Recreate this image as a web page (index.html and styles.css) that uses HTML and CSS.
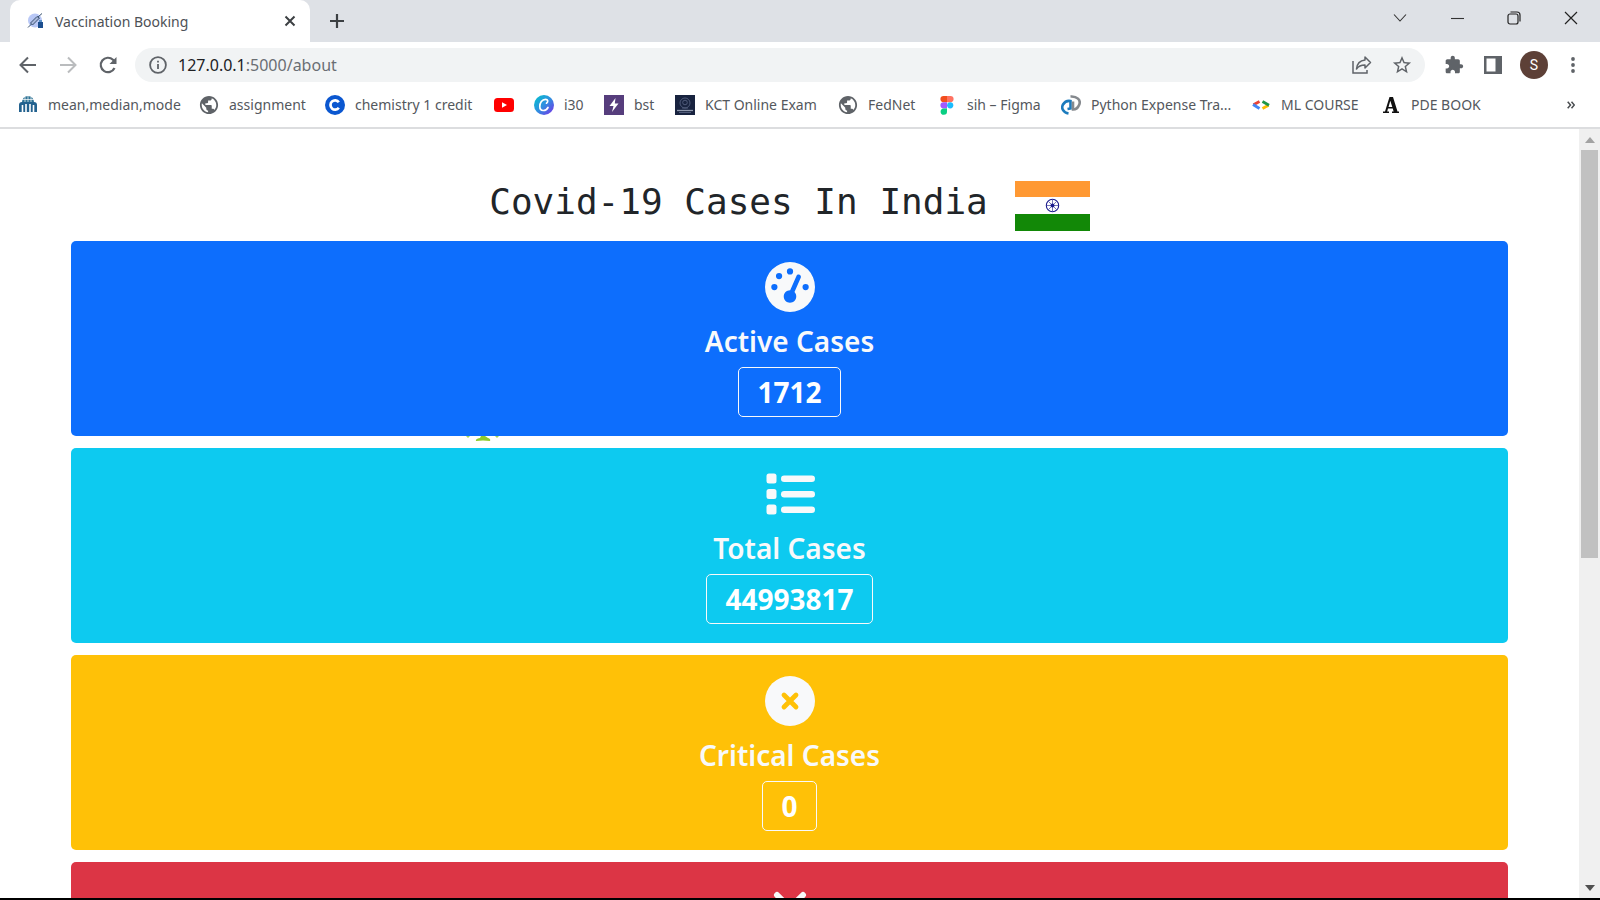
FILE: index.html
```html
<!DOCTYPE html>
<html lang="en">
<head>
<meta charset="utf-8">
<title>Vaccination Booking</title>
<link rel="stylesheet" href="styles.css">
</head>
<body>
<header class="browser">
  <div class="tabstrip">
    <div class="tab">
      <svg class="favicon" viewBox="0 0 16 16"><circle cx="8" cy="7.500" r="7" fill="#b9c8f6"/><path d="M1 14.500 4.500 11M3.500 10 10 3.500 12.500 5 5.500 12ZM11 4 15 .5" stroke="#38506e" fill="#a9b8dc"/><rect x="11" y="9" width="5" height="6" fill="#1d4f8f"/><rect x="12" y="7" width="3" height="2" fill="#5b91c9"/></svg>
      <span class="tab-title">Vaccination Booking</span>
      <button class="icon-btn" aria-label="Close tab"><svg width="12" height="12" viewBox="0 0 12 12"><path d="M1.500 1.500 10.500 10.500M10.500 1.500 1.500 10.500" stroke="#3c4043" stroke-width="2"/></svg></button>
    </div>
    <button class="icon-btn new-tab" aria-label="New tab"><svg width="16" height="16" viewBox="0 0 16 16"><path d="M8 1V15M1 8H15" stroke="#3c4043" stroke-width="2.200"/></svg></button>
    <div class="window-controls">
      <button class="icon-btn" aria-label="Search tabs"><svg width="14" height="14" viewBox="0 0 14 14"><path d="M1 3.500 7 10 13 3.500" fill="none" stroke="#333" stroke-width="1.100"/></svg></button>
      <button class="icon-btn" aria-label="Minimize"><svg width="14" height="14" viewBox="0 0 14 14"><path d="M1 7.500H14" stroke="#333" stroke-width="1.100"/></svg></button>
      <button class="icon-btn" aria-label="Restore"><svg width="14" height="14" viewBox="0 0 14 14"><g fill="none" stroke="#222" stroke-width="1.200"><rect x="1" y="3" width="10" height="10" rx="2"/><path d="M3.500 1H10Q13 1 13 4V10.500"/></g></svg></button>
      <button class="icon-btn" aria-label="Close"><svg width="14" height="14" viewBox="0 0 14 14"><path d="M1 1 13 13M13 1 1 13" stroke="#222" stroke-width="1.200"/></svg></button>
    </div>
  </div>
  <div class="toolbar">
    <nav class="nav-buttons">
      <button class="icon-btn" aria-label="Back"><svg width="18" height="18" viewBox="0 0 18 18"><path d="M17 9H2M9 1.500 1.500 9 9 16.500" fill="none" stroke="#5f6368" stroke-width="2"/></svg></button>
      <button class="icon-btn" aria-label="Forward"><svg width="18" height="18" viewBox="0 0 18 18"><path d="M1 9H16M9 1.500 16.500 9 9 16.500" fill="none" stroke="#babcbe" stroke-width="2"/></svg></button>
      <button class="icon-btn" aria-label="Reload"><svg width="18" height="18" viewBox="0 0 18 18"><path d="M15.500 12A7.200 7.200 0 1 1 14 3.800L16 6" fill="none" stroke="#5f6368" stroke-width="2.200"/><path d="M17.500 1V8H10.500Z" fill="#5f6368"/></svg></button>
    </nav>
    <div class="omnibox">
      <svg width="18" height="18" viewBox="0 0 18 18"><circle cx="9" cy="9" r="7.900" fill="none" stroke="#5f6368" stroke-width="1.800"/><path d="M9 8V13M9 4.800V6.600" stroke="#5f6368" stroke-width="1.800"/></svg>
      <span class="url"><span class="host">127.0.0.1</span>:5000/about</span>
      <button class="icon-btn" aria-label="Share"><svg width="20" height="18" viewBox="0 0 20 18"><g fill="none" stroke="#5f6368" stroke-width="1.500"><path d="M1 5V17H15V14"/><path d="M13 1 18.500 6.500 13 12V9C9 9 6.500 10 4.500 13 5 8 8 4.500 13 4Z" stroke-linejoin="round"/></g></svg></button>
      <button class="icon-btn" aria-label="Bookmark this page"><svg width="20" height="20" viewBox="1 1 22 22"><path fill="#5f6368" d="M22 9.240l-7.190-.62L12 2 9.190 8.630 2 9.240l5.460 4.730L5.820 21 12 17.270 18.180 21l-1.630-7.030L22 9.240zM12 15.400l-3.760 2.270 1-4.280-3.320-2.880 4.380-.38L12 6.100l1.710 4.040 4.380.38-3.320 2.880 1 4.280L12 15.400z"/></svg></button>
    </div>
    <div class="actions">
      <button class="icon-btn" aria-label="Extensions"><svg width="20" height="20" viewBox="0 0 24 24"><path fill="#5f6368" d="M20.500 11H19V7c0-1.100-.9-2-2-2h-4V3.500C13 2.120 11.880 1 10.500 1S8 2.120 8 3.500V5H4c-1.100 0-1.990.9-1.990 2v3.800H3.500c1.490 0 2.700 1.210 2.700 2.700s-1.210 2.700-2.700 2.700H2V20c0 1.100.9 2 2 2h3.800v-1.500c0-1.490 1.210-2.700 2.700-2.700s2.700 1.210 2.700 2.700V22H17c1.100 0 2-.9 2-2v-4h1.500c1.380 0 2.500-1.120 2.500-2.500S21.880 11 20.500 11z"/></svg></button>
      <button class="icon-btn" aria-label="Side panel"><svg width="18" height="18" viewBox="0 0 18 18"><path fill="#5f6368" fill-rule="evenodd" d="M0 0H18V18H0ZM2.500 2.500V15.500H11.500V2.500Z"/></svg></button>
      <button class="avatar" aria-label="Profile">S</button>
      <button class="icon-btn" aria-label="Menu"><svg width="4" height="16" viewBox="0 0 4 16"><g fill="#5f6368"><circle cx="2" cy="2" r="1.900"/><circle cx="2" cy="8" r="1.900"/><circle cx="2" cy="14" r="1.900"/></g></svg></button>
    </div>
  </div>
  <nav class="bookmarks">
    <a href="#"><svg viewBox="0 0 20 20"><path d="M4 7A6 6 0 0 1 16 7Z" fill="#2f7396"/><path d="M7 2V7M10 1V7M13 2V7M4 4.500H16" stroke="#fff" stroke-width=".7"/><path d="M1 17V10Q1 7 4 7H16Q19 7 19 10V17Z" fill="#23628f"/><path d="M4.500 17V10M8 17V9M12 17V9M15.500 17V10" stroke="#fff" stroke-width="1.600"/></svg>mean,median,mode</a>
    <a href="#"><svg viewBox="1 1 22 22"><path fill="#5f6368" d="M12 2C6.480 2 2 6.480 2 12s4.480 10 10 10 10-4.480 10-10S17.520 2 12 2zm-1 17.930c-3.950-.49-7-3.850-7-7.930 0-.62.08-1.210.21-1.790L9 15v1c0 1.100.9 2 2 2v1.930zm6.900-2.540c-.26-.81-1-1.390-1.900-1.390h-1v-3c0-.55-.45-1-1-1H8v-2h2c.55 0 1-.45 1-1V7h2c1.100 0 2-.9 2-2v-.41c2.930 1.190 5 4.060 5 7.410 0 2.080-.8 3.970-2.100 5.390z"/></svg>assignment</a>
    <a href="#"><svg viewBox="0 0 20 20"><circle cx="10" cy="10" r="10" fill="#0b57d0"/><path d="M13.800 7.300A4.600 4.600 0 1 0 13.800 12.700" fill="none" stroke="#fff" stroke-width="2.700"/></svg>chemistry 1 credit</a>
    <a href="#" aria-label="YouTube"><svg viewBox="0 0 20 20"><rect y="3" width="20" height="14" rx="3.500" fill="#f00"/><path d="M8 7.300 13 10 8 12.700Z" fill="#fff"/></svg></a>
    <a href="#"><svg viewBox="0 0 20 20"><defs><linearGradient id="cv" x1="0" y1="0" x2="1" y2="1"><stop offset="0" stop-color="#00c4cc"/><stop offset=".5" stop-color="#2f8fe0"/><stop offset="1" stop-color="#7d2ae8"/></linearGradient></defs><circle cx="10" cy="10" r="10" fill="url(#cv)"/><path d="M12.500 8.200C14.500 7 14 4.300 11.500 4.300 8 4.300 5.800 8 5.800 11.500 5.800 16.800 12 16.500 14 12.500" fill="none" stroke="#fff" stroke-width="1.700" stroke-linecap="round"/></svg>i30</a>
    <a href="#"><svg viewBox="0 0 20 20"><rect width="20" height="20" fill="#563d7c"/><path d="M11.500 3 5.500 11H9.500L8 17 14.500 8.500H10.800Z" fill="#fff"/></svg>bst</a>
    <a href="#"><svg viewBox="0 0 20 20"><rect width="20" height="20" fill="#18233f"/><g fill="none" stroke="#4f5a79"><circle cx="10" cy="8" r="5"/><circle cx="10" cy="7.500" r="2.300"/><path d="M7 13H13"/></g><path d="M2 15.500H18" stroke="#8f98ad" stroke-width="1.300"/><path d="M4 17.500H16" stroke="#4f5a79"/></svg>KCT Online Exam</a>
    <a href="#"><svg viewBox="1 1 22 22"><path fill="#5f6368" d="M12 2C6.480 2 2 6.480 2 12s4.480 10 10 10 10-4.480 10-10S17.520 2 12 2zm-1 17.930c-3.950-.49-7-3.850-7-7.930 0-.62.08-1.210.21-1.790L9 15v1c0 1.100.9 2 2 2v1.930zm6.900-2.540c-.26-.81-1-1.390-1.900-1.390h-1v-3c0-.55-.45-1-1-1H8v-2h2c.55 0 1-.45 1-1V7h2c1.100 0 2-.9 2-2v-.41c2.930 1.190 5 4.060 5 7.410 0 2.080-.8 3.970-2.100 5.390z"/></svg>FedNet</a>
    <a href="#"><svg viewBox="0 0 20 20"><path d="M10 1H6.500a3 3 0 0 0 0 6.200H10Z" fill="#f24e1e"/><path d="M10 1h3.500a3 3 0 0 1 0 6.200H10Z" fill="#ff7262"/><path d="M10 7.200H6.500a3 3 0 0 0 0 6.200H10Z" fill="#a259ff"/><circle cx="13.200" cy="10.300" r="3.100" fill="#1abcfe"/><path d="M6.700 13.400H10V16.500A3.200 3.200 0 1 1 6.700 13.400Z" fill="#0acf83"/></svg>sih – Figma</a>
    <a href="#"><svg viewBox="0 0 20 20"><g fill="none" stroke-width="2.600"><path d="M7.500 18.500C2 17.500 0 13 2 9.500 3.500 7 6.500 5.500 9.500 6V13.500L6.500 14" stroke="#1b7bbd"/><path d="M9.500 1.500C16 1 20 5 18.300 9.500 17 13 14.500 14.500 12 14.500V6.500" stroke="#85898e"/></g></svg>Python Expense Tra...</a>
    <a href="#"><svg viewBox="0 0 20 20"><g fill="none" stroke-width="2.800"><path d="M8.500 6.500 2.500 9.800" stroke="#ea4335"/><path d="M2 9.500 8.500 13.500" stroke="#4285f4"/><path d="M17.500 10.200 11.500 13.500" stroke="#fbbc04"/><path d="M11.500 6.500 18 10.200" stroke="#1e9649"/></g></svg>ML COURSE</a>
    <a href="#"><svg viewBox="0 0 20 20"><path fill="#111" fill-rule="evenodd" d="M8.500 2H12L16.500 16.500H18V18H11V16.500H12.600L11.800 13.500H7L6.200 16.500H8V18H2V16.500H4ZM9.300 5.800 7.500 12H11.300Z"/></svg>PDE BOOK</a>
    <button class="icon-btn more" aria-label="More bookmarks"><svg width="8" height="8" viewBox="0 0 8 8"><path d="M.7 .7 3.500 4 .7 7.300M4.500 .7 7.300 4 4.500 7.300" fill="none" stroke="#4a4d51" stroke-width="1.500"/></svg></button>
  </nav>
</header>
<div class="viewport">
  <main class="page">
    <h1 class="title">Covid-19 Cases In India
      <svg class="flag" viewBox="0 0 75 50"><rect width="75" height="50" fill="#fff"/><rect width="75" height="16" fill="#ff9933"/><rect y="33" width="75" height="17" fill="#128807"/><g fill="none" stroke="#1a1a8c"><circle cx="37.500" cy="24.500" r="6.200" stroke-width="1.100"/><path d="M37.500 19V30M32 24.500H43M33.600 20.600 41.400 28.400M41.400 20.600 33.600 28.400" stroke-width=".6"/></g><circle cx="37.500" cy="24.500" r="2" fill="#1a1a8c"/></svg>
    </h1>
    <section class="card active">
      <svg class="card-icon" viewBox="0 0 512 512"><path fill="currentColor" fill-rule="evenodd" d="M0 256a256 256 0 1 1 512 0A256 256 0 1 1 0 256zM288 96a32 32 0 1 0 -64 0 32 32 0 1 0 64 0zM256 416c35.300 0 64-28.700 64-64c0-17.400-6.900-33.100-18.100-44.600L366 161.700c5.300-12.100-.2-26.300-12.300-31.600s-26.300 .2-31.600 12.300L257.900 288c-.6 0-1.300 0-1.900 0c-35.300 0-64 28.700-64 64s28.700 64 64 64zM176 144a32 32 0 1 0 -64 0 32 32 0 1 0 64 0zM96 288a32 32 0 1 0 0-64 32 32 0 1 0 0 64zm352-32a32 32 0 1 0 -64 0 32 32 0 1 0 64 0z"/></svg>
      <h2>Active Cases</h2>
      <strong class="count">1712</strong>
      <svg class="sprout" width="34" height="6" viewBox="0 0 34 6"><path d="M10 5Q9 3 14 2L15 0H19L22 2Q25 3 24 5Q17 4 10 5Z" fill="#8fcb2b"/><path d="M0 0H4L2 2ZM29 0H33L31 2Z" fill="#a5d65a"/></svg>
    </section>
    <section class="card total">
      <svg class="card-icon" viewBox="0 0 50 50"><g fill="currentColor"><rect x="1.500" y="4.500" width="10" height="10" rx="2.500"/><rect x="1.500" y="20" width="10" height="10" rx="2.500"/><rect x="1.500" y="35.500" width="10" height="10" rx="2.500"/><rect x="16" y="6.500" width="34" height="6.500" rx="3.200"/><rect x="16" y="22" width="34" height="6.500" rx="3.200"/><rect x="16" y="37.500" width="34" height="6.500" rx="3.200"/></g></svg>
      <h2>Total Cases</h2>
      <strong class="count">44993817</strong>
    </section>
    <section class="card critical">
      <svg class="card-icon" viewBox="0 0 50 50"><circle cx="25" cy="25" r="25" fill="currentColor"/><path d="M19 19 31 31M31 19 19 31" stroke="#ffc107" stroke-width="4.800" stroke-linecap="round"/></svg>
      <h2>Critical Cases</h2>
      <strong class="count">0</strong>
    </section>
    <section class="card deaths">
      <svg class="card-icon" viewBox="0 0 50 50"><path d="M12 12 38 38M38 12 12 38" stroke="currentColor" stroke-width="6" stroke-linecap="round"/></svg>
    </section>
  </main>
  <div class="scrollbar">
    <svg width="10" height="6" viewBox="0 0 10 6"><path d="M0 6 5 0 10 6Z" fill="#a3a3a3"/></svg>
    <div class="track"><div class="thumb"></div></div>
    <svg width="10" height="6" viewBox="0 0 10 6"><path d="M0 0 5 6 10 0Z" fill="#505050"/></svg>
  </div>
</div>
</body>
</html>
```
FILE: styles.css
```css
* { box-sizing: border-box; }
body {
  margin: 0;
  height: 100vh;
  display: flex;
  flex-direction: column;
  overflow: hidden;
  border-bottom: 2px solid #000;
  background: #fff;
  font-family: "Noto Sans", sans-serif;
  color: #212529;
}
svg { display: block; flex: none; }
.icon-btn {
  display: flex;
  align-items: center;
  justify-content: center;
  padding: 0;
  border: 0;
  background: none;
}
.browser { flex: none; border-bottom: 2px solid #dcdddf; }

.tabstrip {
  display: flex;
  align-items: center;
  height: 42px;
  padding-left: 10px;
  background: #dee1e6;
}
.tab {
  display: flex;
  align-items: center;
  gap: 12px;
  width: 300px;
  height: 100%;
  padding: 0 14px 0 17px;
  border-radius: 10px 10px 0 0;
  background: #fff;
}
.favicon { width: 16px; height: 16px; }
.tab-title { flex: 1; font-size: 14px; color: #4d5156; }
.new-tab { margin-left: 19px; }
.window-controls {
  display: flex;
  gap: 43px;
  height: 100%;
  margin-left: auto;
  padding: 0 22px 6px 0;
}

.toolbar {
  display: flex;
  align-items: center;
  height: 46px;
  padding: 0 25px 0 19px;
}
.nav-buttons { display: flex; gap: 22px; margin-right: 18px; }
.omnibox {
  flex: 1;
  display: flex;
  align-items: center;
  gap: 20px;
  height: 34px;
  padding: 0 13px 0 14px;
  border-radius: 17px;
  background: #f1f3f4;
}
.url { flex: 1; margin-left: -9px; font-size: 16px; color: #6a6e73; }
.host { color: #202124; }
.actions { display: flex; align-items: center; gap: 20px; margin-left: 19px; }
.actions .icon-btn:last-child { margin-left: 5px; }
.avatar {
  width: 28px;
  height: 28px;
  margin: 0 -2px;
  padding: 0;
  border: 0;
  border-radius: 50%;
  background: #5d4037;
  color: #fff;
  font: 14px Roboto, sans-serif;
}

.bookmarks {
  display: grid;
  grid-template-columns: 181px 126px 169px 40px 70px 71px 163px 99px 124px 190px 130px 1fr auto;
  align-items: center;
  height: 39px;
  padding: 0 25px 6px 18px;
}
.bookmarks a {
  display: flex;
  align-items: center;
  gap: 10px;
  font-size: 14px;
  white-space: nowrap;
  color: #54585d;
  text-decoration: none;
}
.bookmarks a svg { width: 20px; height: 20px; }

.viewport { flex: 1; display: flex; min-height: 0; }
.page {
  flex: 1;
  display: flex;
  flex-direction: column;
  gap: 12px;
  padding: 52px 71px 0;
  overflow: hidden;
}
.title {
  flex: none;
  display: flex;
  align-items: flex-start;
  justify-content: center;
  gap: 27px;
  height: 50px;
  margin: 0 0 -2px;
  font: 400 36px/42px "DejaVu Sans Mono", monospace;
}
.flag { width: 75px; height: 50px; }
.card {
  position: relative;
  flex: none;
  display: flex;
  flex-direction: column;
  align-items: center;
  padding: 21px 20px 19px;
  border-radius: 5px;
  color: #f8f9fa;
}
.active { background: #0d6efd; }
.total { background: #0dcaf0; }
.critical { background: #ffc107; }
.deaths { background: #dc3545; }
.card-icon { width: 50px; height: 50px; margin-bottom: 11px; }
.card h2 { margin: 0 0 8px; font-size: 28px; font-weight: 600; line-height: 36px; }
.count {
  padding: 0 18px;
  border: 1px solid #f8f9fa;
  border-radius: 5px;
  font-size: 28px;
  font-weight: 700;
  line-height: 48px;
  color: #fff;
}
.sprout { position: absolute; top: 100%; left: 27.5%; }

.scrollbar {
  display: flex;
  flex-direction: column;
  align-items: center;
  gap: 7px;
  width: 21px;
  padding: 8px 0 7px;
  background: #f0f0f0;
}
.track { flex: 1; width: 17px; }
.thumb { height: 56%; background: #c1c1c1; }
```
